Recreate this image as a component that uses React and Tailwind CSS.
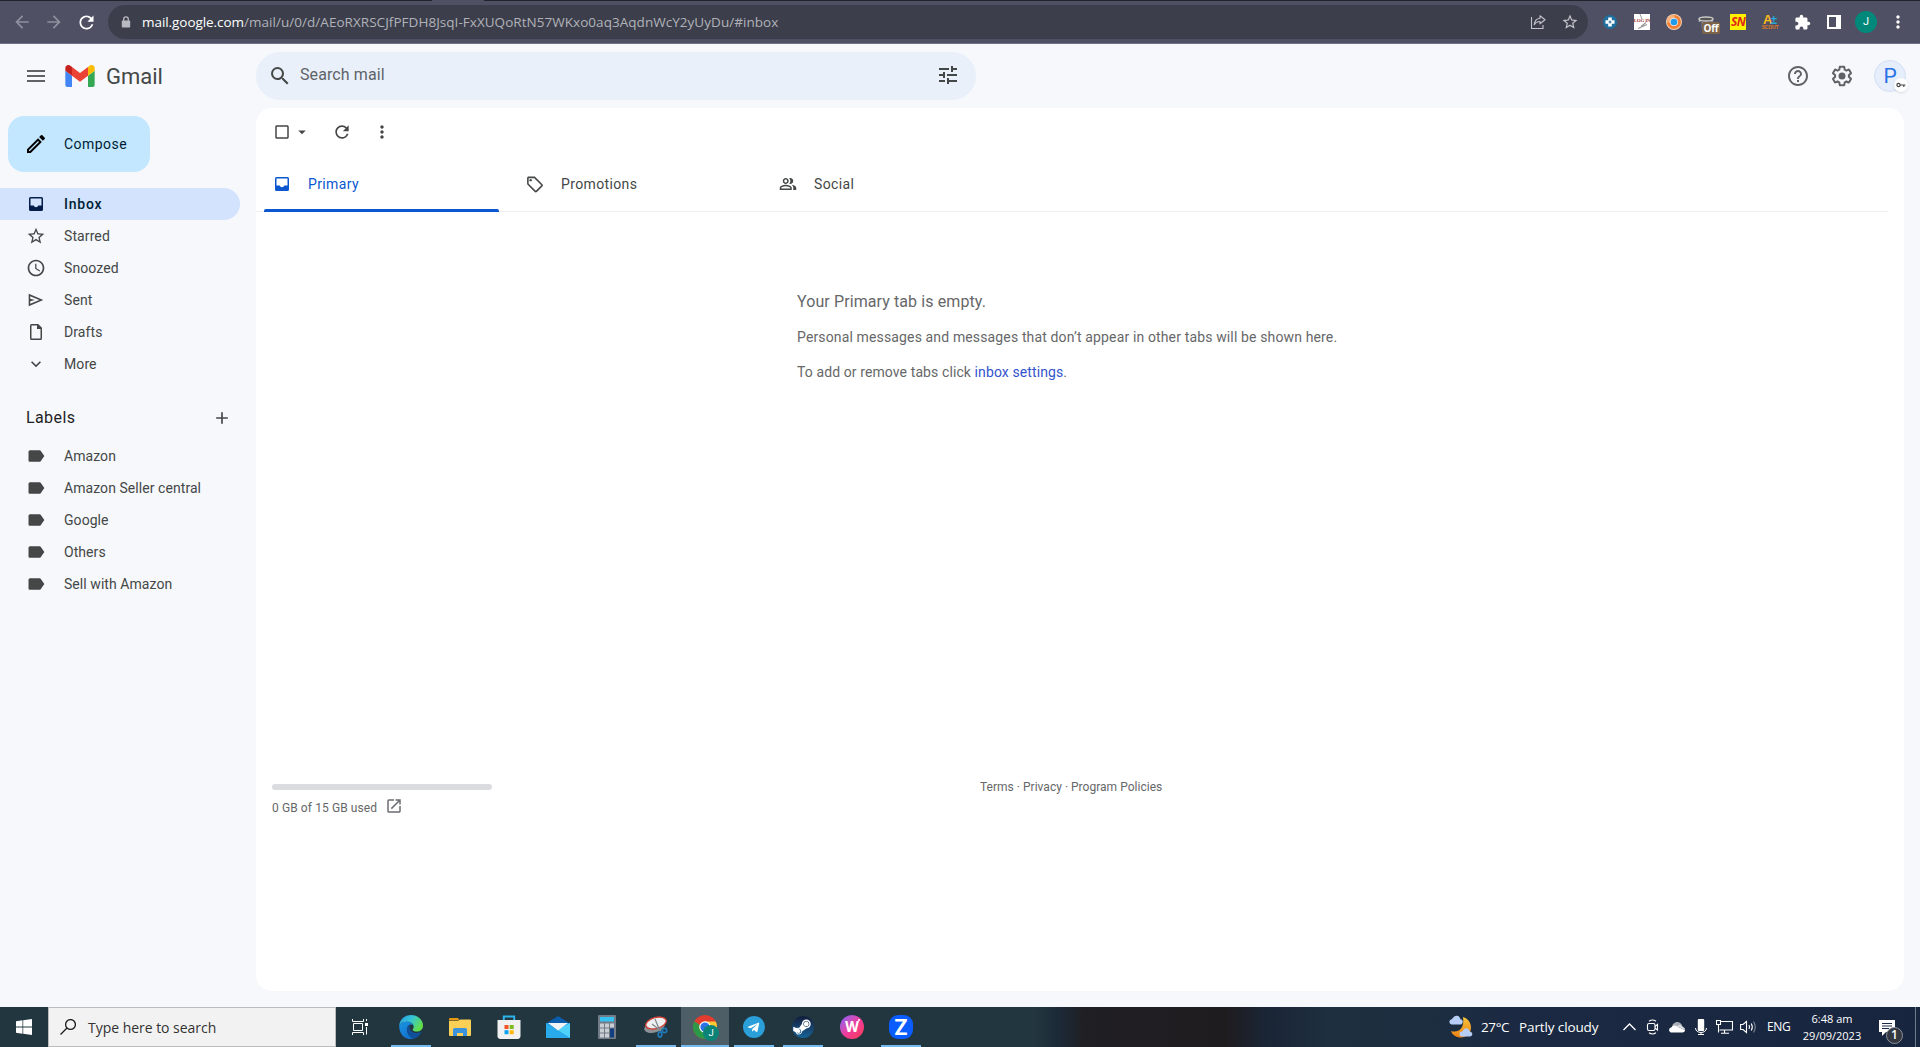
import React from 'react';
import {
  MdMenu, MdSearch, MdTune, MdHelpOutline, MdOutlineModeEdit, MdStarOutline, MdSchedule,
  MdExpandMore, MdAdd, MdLabel, MdArrowDropDown, MdRefresh, MdCheckBoxOutlineBlank,
  MdMoreVert, MdOutlineLocalOffer, MdOutlinePeopleAlt, MdOpenInNew, MdArrowBack, MdArrowForward,
  MdExtension,
} from 'react-icons/md';
import { FaSteamSymbol, FaTelegramPlane } from 'react-icons/fa';

/* ---------- browser bar ---------- */

const ShareIcon = () => (
  <svg width="16" height="16" viewBox="0 0 16 16" fill="none" stroke="#c3c4cb" strokeWidth="1.1">
    <path d="M1.5 3v11.5h11.5V11" />
    <path d="M10 1.8l5 4-5 4V7.5C7 7.5 5.3 8.6 4.2 10.8 4.6 7 6.5 4.6 10 4.2z" strokeLinejoin="round" />
  </svg>
);

const LockIcon = () => (
  <svg width="12" height="12" viewBox="0 0 12 12">
    <path d="M3.7 5V3.2a2.3 2.3 0 0 1 4.6 0V5" fill="none" stroke="#b9bac1" strokeWidth="1.3" />
    <rect x="1.8" y="4.5" width="8.4" height="7" rx="1" fill="#b9bac1" />
  </svg>
);

const BrowserBar = () => (
  <div className="flex h-11 flex-none flex-col border-b border-[#72738a] bg-[#4f5064]">
    <div className="flex h-px flex-none">
      <div className="w-[432px] bg-[#21222c]" />
      <div className="w-[52px]" />
      <div className="flex-1 bg-[#21222c]" />
    </div>
    <div className="flex flex-1 items-center">
      <div className="flex w-[108px] flex-none items-center gap-3 pl-3">
        <MdArrowBack size={20} className="text-[#8f909e]" />
        <MdArrowForward size={20} className="text-[#8f909e]" />
        <MdRefresh size={21} className="text-white" />
      </div>
      <div className="flex h-[34px] w-[1480px] flex-none items-center rounded-full bg-[#3c3f4b] pl-3">
        <LockIcon />
        <span className="ml-[10px] font-['Open_Sans',sans-serif] text-[13.5px] text-[#b1b2b9]">
          <span className="tracking-[-0.06px] text-white">mail.google.com</span>
          <span className="tracking-[0.04px]">/mail/u/0/d/AEoRXRSCJfPFDH8JsqI-FxXUQoRtN57WKxo0aq3AqdnWcY2yUyDu/#inbox</span>
        </span>
        <div className="ml-auto mr-[9px] flex items-center gap-[15px]">
          <ShareIcon />
          <MdStarOutline size={18} className="text-[#c3c4cb]" />
        </div>
      </div>
      <div className="ml-[6px] flex">
        <div className="flex w-8 items-center justify-center">
          <svg width="14" height="14" viewBox="0 0 14 14">
            <circle cx="7" cy="7" r="7" fill="#1f6f9f" />
            <path d="M7 2.5v9M2.5 7h9" stroke="#fff" strokeWidth="3.6" />
            <path d="M7 5.5v3M5.5 7h3" stroke="#1f6f9f" />
          </svg>
        </div>
        <div className="flex w-8 items-center justify-center">
          <div className="relative flex h-4 w-4 justify-center overflow-hidden bg-white">
            <svg className="absolute inset-0" width="16" height="16" viewBox="0 0 16 16" stroke="#999" fill="none">
              <path d="M6 0l2 5" />
              <path d="M4 14.5l9-4M7 12.5l5-4" strokeWidth="1.2" />
            </svg>
            <span className="relative mt-[4px] whitespace-nowrap font-['Liberation_Serif',serif] text-[5px] font-bold leading-[6px] tracking-[-0.2px] text-[#a03030]">LOG IN</span>
          </div>
        </div>
        <div className="flex w-8 items-center justify-center">
          <svg width="16" height="16" viewBox="0 0 16 16">
            <circle cx="8" cy="8" r="8" fill="#f7d3b4" />
            <circle cx="8" cy="8" r="7" fill="#ef8035" />
            <path d="M8 1a7 7 0 0 0-7 7l3 1 5-5z" fill="#f8b27b" />
            <circle cx="8" cy="8" r="4" fill="#e8eef5" />
            <circle cx="8" cy="8" r="3.3" fill="#1e9bea" />
          </svg>
        </div>
        <div className="relative flex w-8 items-center justify-center">
          <svg width="16" height="16" viewBox="0 0 16 16">
            <path d="M1.5 6v2M4.5 8v6M14 6v4" stroke="#a8a8a8" strokeWidth="1.5" />
            <ellipse cx="8" cy="5" rx="7" ry="2" fill="#555" stroke="#c9c9c9" strokeWidth="1.5" />
          </svg>
          <span className="absolute left-3 top-[11px] flex h-3 w-[18px] items-center justify-center rounded-[2px] bg-[#7d6449] font-['Open_Sans',sans-serif] text-[10px] font-bold leading-none tracking-[-0.2px] text-white">Off</span>
        </div>
        <div className="flex w-8 items-center justify-center">
          <span className="flex h-4 w-4 items-center justify-center bg-[#fff200] font-['Open_Sans',sans-serif] text-[12px] font-bold italic leading-none tracking-[-0.8px] text-[#e0261b]">SN</span>
        </div>
        <div className="flex w-8 flex-col items-center justify-center font-['Liberation_Sans',sans-serif] font-bold leading-none">
          <div className="flex h-[11px] items-center">
            <span className="text-[13px] text-[#f9b91c]">A</span>
            <span className="-ml-0.5 text-[12px] text-[#2aa5d8]">±</span>
          </div>
          <span className="h-[5px] text-[5px] tracking-[-0.2px] text-[#e07b22]">SCOUT</span>
        </div>
        <div className="flex w-8 items-center justify-center">
          <MdExtension size={17} className="text-white" />
        </div>
        <div className="flex w-8 items-center justify-center">
          <div className="h-[14px] w-[14px] border-2 border-r-[5px] border-white" />
        </div>
        <div className="flex w-8 items-center justify-center">
          <span className="flex h-[22px] w-[22px] items-center justify-center rounded-full bg-[#00897b] font-['Roboto',sans-serif] text-[11px] text-white">J</span>
        </div>
        <div className="flex w-8 items-center justify-center">
          <MdMoreVert size={20} className="text-white" />
        </div>
      </div>
    </div>
  </div>
);

/* ---------- gmail ---------- */

const GmailLogo = () => (
  <svg width="30" height="22" viewBox="52 42 88 66">
    <path fill="#4285f4" d="M58 108h14V74L52 59v43c0 3.32 2.69 6 6 6" />
    <path fill="#34a853" d="M120 108h14c3.32 0 6-2.69 6-6V59l-20 15" />
    <path fill="#fbbc04" d="M120 48v26l20-15v-8c0-7.42-8.47-11.65-14.4-7.2" />
    <path fill="#ea4335" d="M72 74V48l24 18 24-18v26L96 92" />
    <path fill="#c5221f" d="M52 51v8l20 15V48l-5.6-4.2c-5.94-4.45-14.4-.22-14.4 7.2" />
  </svg>
);

const GearIcon = () => (
  <svg width="24" height="24" viewBox="0 0 24 24" fill="#5f6368">
    <path d="M13.85 22.25h-3.7c-.74 0-1.36-.54-1.45-1.27l-.27-1.89c-.27-.14-.53-.29-.79-.46l-1.8.72c-.7.26-1.47-.03-1.81-.65L2.2 15.53c-.35-.66-.2-1.44.36-1.88l1.53-1.19c-.01-.15-.02-.3-.02-.46 0-.15.01-.31.02-.46l-1.52-1.19c-.59-.45-.74-1.26-.37-1.88l1.85-3.19c.34-.62 1.11-.9 1.79-.63l1.81.73c.26-.17.52-.32.78-.46l.27-1.91c.09-.7.71-1.25 1.44-1.25h3.7c.74 0 1.36.54 1.45 1.27l.27 1.89c.27.14.53.29.79.46l1.8-.72c.71-.26 1.48.03 1.82.65l1.84 3.18c.36.66.2 1.44-.36 1.88l-1.52 1.19c.01.15.02.3.02.46s-.01.31-.02.46l1.52 1.19c.56.45.72 1.23.37 1.86l-1.86 3.22c-.34.62-1.11.9-1.8.63l-1.8-.72c-.26.17-.52.32-.78.46l-.27 1.91c-.1.68-.72 1.22-1.46 1.22zm-3.23-2h2.76l.37-2.55.53-.22c.44-.18.88-.44 1.34-.78l.45-.34 2.38.96 1.38-2.4-2.03-1.58.07-.56c.03-.26.06-.51.06-.78s-.03-.53-.06-.78l-.07-.56 2.03-1.58-1.39-2.4-2.39.96-.45-.35c-.42-.32-.87-.58-1.33-.77l-.52-.22-.37-2.55h-2.76l-.37 2.55-.53.21c-.44.19-.88.44-1.34.79l-.45.33-2.38-.95-1.39 2.39 2.03 1.58-.07.56a7 7 0 0 0-.06.79c0 .26.02.53.06.78l.07.56-2.03 1.58 1.38 2.4 2.39-.96.45.35c.43.33.86.58 1.33.77l.53.22.38 2.55z" />
    <circle cx="12" cy="12" r="3.5" />
  </svg>
);

const InboxIcon = ({ className }) => (
  <svg className={className} width="20" height="20" viewBox="0 0 20 20" fill="currentColor">
    <path fillRule="evenodd" d="M4.5 3h11A1.5 1.5 0 0 1 17 4.5v11a1.5 1.5 0 0 1-1.5 1.5h-11A1.5 1.5 0 0 1 3 15.5v-11A1.5 1.5 0 0 1 4.5 3zM4.5 4.5v7h3.2a2.4 2.4 0 0 0 4.6 0h3.2v-7z" />
  </svg>
);

const SentIcon = () => (
  <svg width="20" height="20" viewBox="-0.5 -1 26 26" fill="currentColor">
    <path d="M3 20V4l19 8zm2-3 11.850-5L5 7v3.5l6 1.5-6 1.5z" />
  </svg>
);

const DraftIcon = () => (
  <svg width="20" height="20" viewBox="0 0 20 20" fill="currentColor">
    <path fillRule="evenodd" d="M5.5 2h6.7L16 5.8v10.7a1.5 1.5 0 0 1-1.5 1.5h-9A1.5 1.5 0 0 1 4 16.5v-13A1.5 1.5 0 0 1 5.5 2zm0 1.5v13h9V7H11V3.5z" />
  </svg>
);

const folders = [
  { name: 'Starred', icon: MdStarOutline },
  { name: 'Snoozed', icon: MdSchedule },
  { name: 'Sent', icon: SentIcon },
  { name: 'Drafts', icon: DraftIcon },
  { name: 'More', icon: MdExpandMore },
];

const labels = ['Amazon', 'Amazon Seller central', 'Google', 'Others', 'Sell with Amazon'];

const Header = () => (
  <header className="flex h-16 flex-none items-center">
    <div className="flex w-64 flex-none items-center pl-6">
      <MdMenu size={24} className="text-[#5f6368]" />
      <div className="ml-[17px] flex items-center gap-[11px]">
        <GmailLogo />
        <span className="pt-0.5 text-[22px] leading-none text-[#444746]">Gmail</span>
      </div>
    </div>
    <div className="flex h-12 w-[720px] items-center rounded-full bg-[#e9f0fa] pl-3 pr-4">
      <MdSearch size={24} className="text-[#444746]" />
      <span className="ml-2 pb-0.5 text-base tracking-[0.1px] text-[#5f6368]">Search mail</span>
      <MdTune size={24} className="mb-0.5 ml-auto text-[#444746]" />
    </div>
    <div className="ml-auto flex items-center gap-5 pr-[14px]">
      <MdHelpOutline size={24} className="text-[#5f6368]" />
      <GearIcon />
      <div className="relative flex h-8 w-8 items-center justify-center rounded-full border border-[#d5e0f5] bg-[#e6eefc]">
        <span className="text-[21px] leading-none text-[#2871e6]">P</span>
        <span className="absolute left-[19px] top-[17px] flex h-[14px] w-[14px] items-center justify-center rounded-full bg-white shadow">
          <svg width="10" height="6" viewBox="0 0 10 6" fill="none" stroke="#444746" strokeWidth="1.2">
            <circle cx="2.5" cy="3" r="1.6" />
            <path d="M4 3h5.5M7.8 3v2" />
          </svg>
        </span>
      </div>
    </div>
  </header>
);

const Sidebar = () => (
  <aside className="w-64 flex-none text-sm tracking-[0.1px] text-[#444746]">
    <button className="ml-2 mt-2 flex h-14 w-[142px] items-center rounded-2xl bg-[#c2e7ff] pl-4 text-[#001d35]">
      <MdOutlineModeEdit size={24} className="text-black" />
      <span className="ml-4 tracking-[0.45px]">Compose</span>
    </button>
    <nav className="mt-4">
      <div className="flex h-8 w-60 items-center rounded-r-full bg-[#d3e3fd] pl-[26px] text-[#001d35]">
        <InboxIcon className="text-[#041e49]" />
        <span className="ml-[18px] font-medium tracking-[0.75px]">Inbox</span>
      </div>
      {folders.map(({ name, icon: Icon }) => (
        <div key={name} className="flex h-8 items-center pl-[26px]">
          <Icon size={20} />
          <span className="ml-[18px]">{name}</span>
        </div>
      ))}
    </nav>
    <div className="mt-[22px] flex h-8 items-center justify-between pl-[26px] pr-6">
      <span className="text-base tracking-[0.4px] text-[#1f1f1f]">Labels</span>
      <MdAdd size={20} />
    </div>
    <div className="mt-[6px] tracking-[0.06px]">
      {labels.map((l) => (
        <div key={l} className="flex h-8 items-center pl-[26px]">
          <MdLabel size={20} />
          <span className="ml-[18px]">{l}</span>
        </div>
      ))}
    </div>
  </aside>
);

const Tab = ({ icon: Icon, size, label, active }) => (
  <div className={active ? 'w-[253px] pl-2 text-[#0b57d0]' : 'w-[253px] pl-2 text-[#444746]'}>
    <div className="flex h-[53px] w-[235px] items-center pl-2 pt-[3px]">
      <Icon size={size} className="w-5" />
      <span className="ml-4 tracking-[0.36px]">{label}</span>
    </div>
    {active && <div className="h-[3px] w-[235px] rounded-t-[2px] bg-[#0b57d0]" />}
  </div>
);

const MailPanel = () => (
  <main className="mr-4 h-[883px] flex-1 rounded-2xl bg-white text-sm text-[#666769]">
    <div className="flex h-12 items-center text-[#444746]">
      <MdCheckBoxOutlineBlank size={18} className="ml-[17px]" />
      <MdArrowDropDown size={18} className="ml-0.5" />
      <MdRefresh size={20} className="ml-[21px]" />
      <MdMoreVert size={20} className="ml-5" />
    </div>
    <div className="mr-4 flex h-14 border-b border-[#eceef0]">
      <Tab icon={InboxIcon} label="Primary" active />
      <Tab icon={MdOutlineLocalOffer} size={19} label="Promotions" />
      <Tab icon={MdOutlinePeopleAlt} size={18} label="Social" />
    </div>
    <div className="ml-[541px] mt-[77px] h-[495px]">
      <p className="text-base leading-[26px] tracking-[0.1px]">Your Primary tab is empty.</p>
      <p className="mt-[11px] leading-[22px] tracking-[0.14px]">Personal messages and messages that don’t appear in other tabs will be shown here.</p>
      <p className="mt-[13px] leading-[22px] tracking-[0.1px]">
        To add or remove tabs click <a className="text-[#3355cc]">inbox settings</a>.
      </p>
    </div>
    <div className="flex text-xs">
      <div className="ml-4 w-[220px]">
        <div className="h-1.5 rounded-full bg-[#dadce0]" />
        <div className="mt-[7px] flex items-center gap-[8px] leading-[18px]">
          <span className="pt-0.5 tracking-[0.1px]">0 GB of 15 GB used</span>
          <MdOpenInNew size={18} className="-mt-0.5 text-[#6b6e72]" />
        </div>
      </div>
      <div className="-mt-1.5 ml-[488px] leading-[18px] tracking-[0.02px]">Terms · Privacy · Program Policies</div>
    </div>
  </main>
);

/* ---------- taskbar ---------- */

const TaskView = () => (
  <svg width="16" height="16" viewBox="0 0 16 16" fill="none" stroke="#fff">
    <path d="M1.5 4.5h9v7h-9z" />
    <path d="M.5 0v2.5h11V0M.5 16v-2.5h11V16M14.5 0v2M14.5 8v7.5" />
    <path d="M13 4h3v3h-3z" fill="#fff" stroke="none" />
  </svg>
);

const EdgeIcon = () => (
  <svg width="24" height="24" viewBox="0 0 24 24">
    <defs>
      <linearGradient id="edgeTop" x1="0" y1="0" x2="1" y2="0.5">
        <stop offset="0" stopColor="#2497e0" />
        <stop offset="0.5" stopColor="#35c3d8" />
        <stop offset="1" stopColor="#62de4c" />
      </linearGradient>
      <linearGradient id="edgeLow" x1="0" y1="0" x2="0.6" y2="1">
        <stop offset="0" stopColor="#1b93e0" />
        <stop offset="1" stopColor="#1172cf" />
      </linearGradient>
    </defs>
    <path d="M.2 10.5C1 4 6 0 12 0c7 0 12 5 12 10.5 0 4-3 6-6.2 6-2.6 0-4.2-1-4.2-1.8 0-.6 1.1-1.1 1.1-3 0-3-3-5-6.5-5C4.5 6.7 1.5 8 .2 10.5z" fill="url(#edgeTop)" />
    <path d="M.2 10.5C1.5 8 4.5 6.7 8.2 6.7c3 0 5.3 1.4 6.2 3.3-2.9-1.5-6.4.2-6.4 4.5 0 4.3 3.2 8.8 7.5 9-7.8 2.2-15.5-3-15.3-13z" fill="url(#edgeLow)" />
    <path d="M8 14.5c0-2.5 1.3-4.3 3-4.8-.9 1.5-.7 4 1 6 2.3 2.6 6.8 2.9 10.6.8-1.5 3.6-4.2 6.6-7.6 7.2C10.5 23 8 18.5 8 14.5z" fill="#10509a" />
  </svg>
);

const FolderIcon = () => (
  <svg width="22" height="18" viewBox="0 0 22 18">
    <path d="M0 1a1 1 0 0 1 1-1h8l1.5 2.5H0z" fill="#e59a12" />
    <path d="M0 3h9l2-1.5h10a1 1 0 0 1 1 1V17a1 1 0 0 1-1 1H1a1 1 0 0 1-1-1z" fill="#fccf56" />
    <path d="M4 18v-6.5A1.5 1.5 0 0 1 5.5 10h11a1.5 1.5 0 0 1 1.5 1.5V18h-4v-3H8v3z" fill="#3b93dc" />
  </svg>
);

const StoreIcon = () => (
  <svg width="24" height="24" viewBox="0 0 24 24">
    <path d="M6.8 5V1.5h10.4V5" fill="none" stroke="#2db3ec" strokeWidth="2" />
    <path d="M.5 5h23v15.5A3 3 0 0 1 20.5 24h-17a3 3 0 0 1-3-3.5z" fill="#f1f1f1" />
    <path d="M7.5 10h4v4h-4z" fill="#f35325" />
    <path d="M12.7 10h4v4h-4z" fill="#7fba1c" />
    <path d="M7.5 15.2h4v4h-4z" fill="#0da2ee" />
    <path d="M12.7 15.2h4v4h-4z" fill="#ffb70a" />
  </svg>
);

const MailIcon = () => (
  <svg width="24" height="22" viewBox="0 0 24 22">
    <path d="M0 7.5L12 0l12 7.5z" fill="#0b5cab" />
    <path d="M0 7h24v15H0z" fill="#1c93dd" />
    <path d="M24 7v15L11 14z" fill="#4fd2fa" />
    <path d="M0 22V7l24 15z" fill="#29aaea" />
    <path d="M2 7h20l-10 7.5z" fill="#f1f3f5" />
  </svg>
);

const CalcIcon = () => (
  <svg width="18" height="24" viewBox="0 0 18 24">
    <rect width="18" height="24" rx="1" fill="#737b86" />
    <path d="M2 2h14v4.5H2z" fill="#35c2f1" />
    <g fill="#c9ced4">
      <path d="M2 8.5h4v4H2zM7 8.5h4v4H7zM12 8.5h4v4h-4zM2 13.5h4v4H2zM7 13.5h4v4H7zM2 18.5h4v4H2zM7 18.5h4v4H7z" />
    </g>
    <path d="M12 13.5h4v9h-4z" fill="#123f80" />
  </svg>
);

const SnipIcon = () => (
  <svg width="24" height="22" viewBox="0 0 24 22">
    <ellipse cx="10.5" cy="11" rx="10.5" ry="5.5" transform="rotate(-15 10.5 11)" fill="#8d9194" />
    <ellipse cx="12" cy="7" rx="10.5" ry="5.5" transform="rotate(-15 12 7)" fill="#eef0f1" stroke="#cf4038" strokeWidth="1.3" />
    <path d="M11 3l5 12M8 8l9 7" stroke="#85898d" strokeWidth="1.3" />
    <g fill="none" stroke="#1f79b8" strokeWidth="1.7">
      <circle cx="20.5" cy="14.5" r="2.2" />
      <ellipse cx="16" cy="18.5" rx="1.8" ry="2.6" />
    </g>
  </svg>
);

const ChromeIcon = () => (
  <div className="relative h-6 w-6">
    <svg width="24" height="24" viewBox="0 0 24 24">
      <circle cx="12" cy="12" r="12" fill="#e33b2e" />
      <path d="M1.6 6A12 12 0 0 0 12 24l5.5-9.5-5.5-2.5z" fill="#2a9a48" />
      <path d="M12 6.5h10.7A12 12 0 0 1 12 24l5.2-9z" fill="#fcc934" />
      <path d="M1.6 6l5.2 9L12 12V6.5z" fill="#e33b2e" />
      <path d="M1.6 6l5.2 9L9 12z" fill="#2a9a48" />
      <circle cx="12" cy="12" r="5.8" fill="#fff" />
      <circle cx="12" cy="12" r="4.6" fill="#2a72e5" />
    </svg>
    <span className="absolute left-[10px] top-[10px] flex h-4 w-4 items-center justify-center rounded-full bg-[#0b8376] font-['Roboto',sans-serif] text-[9.5px] leading-none text-white">J</span>
  </div>
);

const apps = [
  { id: 'edge', open: true, icon: <EdgeIcon /> },
  { id: 'explorer', icon: <FolderIcon /> },
  { id: 'store', icon: <StoreIcon /> },
  { id: 'mail', icon: <MailIcon /> },
  { id: 'calc', icon: <CalcIcon /> },
  { id: 'snip', open: true, icon: <SnipIcon /> },
  { id: 'chrome', active: true, icon: <ChromeIcon /> },
  {
    id: 'telegram', open: true,
    icon: (
      <div className="flex h-[22px] w-[22px] items-center justify-center rounded-full bg-[#2a9fd9]">
        <FaTelegramPlane size={13} className="mr-0.5 text-white" />
      </div>
    ),
  },
  {
    id: 'steam', open: true,
    icon: (
      <div className="flex h-[22px] w-[22px] items-center justify-center rounded-full bg-linear-to-b from-[#111d3c] to-[#14659a]">
        <FaSteamSymbol size={20} className="-ml-0.5 text-white" />
      </div>
    ),
  },
  {
    id: 'wps',
    icon: (
      <div className="relative flex h-6 w-6 items-center justify-center rounded-full bg-linear-to-br from-[#7a54ff] via-[#ee3a9c] to-[#ff3a4c]">
        <span className="font-['Inter',sans-serif] text-[14px] font-bold leading-none text-white">W</span>
        <span className="absolute left-[18px] top-[4px] h-0.5 w-0.5 rounded-full bg-white" />
      </div>
    ),
  },
  {
    id: 'zoom', open: true,
    icon: (
      <div className="flex h-6 w-6 items-center justify-center rounded-[9px] bg-[#0b5cff]">
        <span className="font-['Inter',sans-serif] text-[21px] font-bold leading-none text-white">Z</span>
      </div>
    ),
  },
];

const WeatherIcon = () => (
  <svg width="24" height="24" viewBox="0 0 24 24">
    <defs>
      <linearGradient id="moon" x1="0" y1="0" x2="0" y2="1">
        <stop offset="0" stopColor="#f7c53c" />
        <stop offset="1" stopColor="#ee8013" />
      </linearGradient>
    </defs>
    <path d="M14 2c5 1.5 8 5.5 8 10.5 0 6-4.5 10-10 10-5 0-8.5-2.5-10-6.5 6 2 14-1 12-14z" fill="url(#moon)" />
    <path d="M2.5 9.5a2.7 2.7 0 0 1 0-5.3C3.5 4.2 4.5.5 8 .8c2.5.2 3 2.4 3.5 3.4 3 .2 3 4.8 0 5.3z" fill="#b7cdf5" />
    <path d="M13 21.5a2.5 2.5 0 0 1 0-5c1 0 1.5-3.5 4.5-3.3 2.5.2 2.8 2.3 3.2 3.2 3.5.3 3.5 4.8 0 5.1z" fill="#b7cdf5" />
  </svg>
);

const Tray = () => (
  <div className="ml-auto flex h-full w-[471px] flex-none items-center font-['Open_Sans',sans-serif] text-white">
    <WeatherIcon />
    <span className="ml-2 w-[38px] text-[13.5px] tracking-[-0.4px]">27°C</span>
    <span className="w-[103px] text-[13.5px] tracking-[-0.12px]">Partly cloudy</span>
    <svg className="w-6 flex-none" width="24" height="16" viewBox="0 0 24 16" fill="none" stroke="#fff" strokeWidth="1.3">
      <path d="M1.5 11L7.5 5l6 6" />
    </svg>
    <svg className="-ml-px flex-none" width="16" height="16" viewBox="0 0 16 16" fill="none" stroke="#fff" strokeWidth="1.1">
      <rect x="2.5" y="4.5" width="7.5" height="7" rx="1.5" />
      <path d="M10 7.5l2.5-2v5.5L10 9M4 2.2q3.5-2.5 7 0M4 13.8q3.5 2.5 7 0" />
    </svg>
    <svg className="ml-2 flex-none" width="16" height="12" viewBox="0 0 16 12">
      <path d="M3 6.5C3 1 10-1.5 13 4l-5 4z" fill="#a9aeb8" />
      <path d="M3 11.5c-3.5 0-4-4.5-.5-5.2C4 4 6.5 4 8 5.5L16 9c0 1.5-1 2.5-2.5 2.5z" fill="#fff" />
      <path d="M8 5.5C9 3.5 13 3 14 6c1.5.3 2 1.5 2 3z" fill="#d8dbe0" />
    </svg>
    <svg className="ml-2 flex-none" width="16" height="16" viewBox="0 0 16 16">
      <rect x="4.8" width="6.4" height="12" rx="1" fill="#fff" />
      <path d="M2.5 9c0 6 11 6 11 0M8 13.5V16M5 15.5h6" fill="none" stroke="#fff" />
    </svg>
    <svg className="ml-[7px] flex-none" width="17" height="14" viewBox="0 0 17 14" fill="none" stroke="#fff" strokeWidth="1.1">
      <path d="M4.5 1.5h12v8.5H3.500M.5.5h4v4h-4zM2.5 4.5v8M8.5 10v3M5 13.3h8" />
    </svg>
    <svg className="ml-[7px] flex-none" width="17" height="14" viewBox="0 0 17 14" fill="none" stroke="#fff" strokeWidth="1.1">
      <path d="M.6 4.5H3L6.5 1.5v11L3 9.5H.6zM9 5q1 2 0 4M11.3 3.5q2 3.5 0 7" />
      <path d="M13.5 1.5q3.5 5.5 0 11" stroke="#7f8797" />
    </svg>
    <span className="ml-[10px] w-[35px] text-xs tracking-[-0.4px]">ENG</span>
    <div className="w-[60px] text-center text-[11px] leading-[17px]">
      <div>6:48 am</div>
      <div>29/09/2023</div>
    </div>
    <div className="relative ml-[17px] h-[15px] w-4">
      <svg width="16" height="16" viewBox="0 0 16 16">
        <path d="M0 0h16v12H7l-4 4v-4H0z" fill="#fff" />
        <path d="M3 3.5h10M3 6h10M3 8.5h7" stroke="#1b2a44" />
      </svg>
      <span className="absolute left-[7px] top-[7px] flex h-[17px] w-[17px] items-center justify-center rounded-full border border-[#8d929b] bg-[#33373f] text-[12px] font-semibold leading-none">1</span>
    </div>
    <div className="ml-auto mr-1 h-full w-px bg-[#6f7a8c]" />
  </div>
);

const Taskbar = () => (
  <footer className="flex h-10 flex-none items-center bg-[linear-gradient(90deg,#22363f_0px,#22363f_1035px,#1c2937_1060px,#201f23_1085px,#1f1c1f_1225px,#1a2535_1265px,#1e2f40_1330px,#1d2e40_1420px,#1b2a42_1500px,#18253f_1920px)]">
    <div className="flex w-12 justify-center">
      <svg width="16" height="16" viewBox="0 0 16 16" fill="#fff">
        <path d="M0 2.2l6.5-.9v6.3H0zM7.2 1.2L16 0v7.6H7.2zM0 8.4h6.5v6.3L0 13.8zM7.2 8.4H16V16l-8.8-1.2z" />
      </svg>
    </div>
    <div className="flex h-10 w-72 items-center border border-[#bcbcbc] bg-[#f2f2f2] pl-[11px]">
      <svg width="16" height="16" viewBox="0 0 16 16" fill="none" stroke="#1a1a1a" strokeWidth="1.3">
        <circle cx="10.5" cy="5.5" r="4.9" />
        <path d="M7 9L.5 15.5" />
      </svg>
      <span className="ml-3 pt-0.5 font-['Open_Sans',sans-serif] text-sm tracking-[-0.03px] text-[#333]">Type here to search</span>
    </div>
    <div className="mr-[3px] flex w-12 justify-center">
      <TaskView />
    </div>
    <div className="flex h-10 gap-px">
      {apps.map((app) => (
        <div key={app.id} className={app.active ? 'flex w-12 flex-col items-center bg-[#4e5e66]' : 'flex w-12 flex-col items-center'}>
          <div className="flex h-[38px] items-center justify-center pt-0.5">{app.icon}</div>
          {app.active && <div className="h-0.5 w-12 bg-[#76b9ed]" />}
          {app.open && <div className="h-0.5 w-10 bg-[#76b9ed]" />}
        </div>
      ))}
    </div>
    <Tray />
  </footer>
);

const App = () => {
  return (
    <div className="flex h-[1047px] w-[1920px] flex-col overflow-hidden bg-[#f6f8fc] font-['Roboto',sans-serif]">
      <BrowserBar />
      <Header />
      <div className="flex flex-1">
        <Sidebar />
        <MailPanel />
      </div>
      <Taskbar />
    </div>
  );
};

export default App;
